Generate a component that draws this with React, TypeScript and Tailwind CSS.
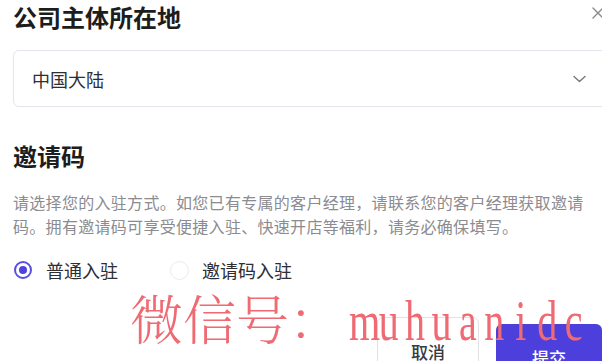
import React from "react";

const latin = "muhuanidc".split("");

export default function App() {
  return (
    <div className="relative w-[602px] h-[361px] overflow-hidden bg-white font-['Noto_Sans_CJK_SC',sans-serif]">
      <div className="flex flex-col pl-[13px]">
        {/* header */}
        <div className="flex items-start h-[50px]">
          <div className="mt-[2px] text-[24px] leading-[30px] font-semibold text-[#1d1d20]">
            公司主体所在地
          </div>
          <svg
            className="ml-auto mt-[7px] mr-[-2px]"
            width="12"
            height="12"
            viewBox="0 0 12 12"
            fill="none"
            stroke="#8a8a8e"
            strokeWidth="1.4"
            strokeLinecap="round"
          >
            <path d="M1 1L11 11M11 1L1 11" />
          </svg>
        </div>

        {/* select */}
        <div className="flex items-center justify-between w-[600px] h-[57px] border border-[#e4e4ec] rounded-[6px] pl-[18px] pr-[26px]">
          <span className="text-[18px] leading-[24px] text-[#2e2e33]">中国大陆</span>
          <svg
            width="13"
            height="8"
            viewBox="0 0 13 8"
            fill="none"
            stroke="#77777c"
            strokeWidth="1.4"
            strokeLinecap="round"
            strokeLinejoin="round"
          >
            <path d="M1 1.5L6.5 6.5L12 1.5" />
          </svg>
        </div>

        {/* invite code */}
        <div className="mt-[34px] text-[24px] leading-[30px] font-semibold text-[#1d1d20]">
          邀请码
        </div>
        <p className="mt-[19px] w-[576px] text-[16px] leading-[24px] tracking-[0.3px] text-[#8b8b90]">
          请选择您的入驻方式。如您已有专属的客户经理，请联系您的客户经理获取邀请码。拥有邀请码可享受便捷入驻、快速开店等福利，请务必确保填写。
        </p>

        {/* radios */}
        <div className="mt-[19px] flex items-center h-[26px]">
          <span className="ml-[1px] flex items-center justify-center w-[18px] h-[18px] rounded-full border-2 border-[#5b4fe2]">
            <span className="w-[8px] h-[8px] rounded-full bg-[#4f42de]" />
          </span>
          <span className="ml-[14px] text-[18px] leading-[24px] text-[#2e2e33]">普通入驻</span>
          <span className="ml-[52px] w-[19px] h-[19px] rounded-full border border-[#ececef]" />
          <span className="ml-[13px] text-[18px] leading-[24px] text-[#2e2e33]">邀请码入驻</span>
        </div>

        {/* buttons */}
        <div className="mt-[34px] flex items-start">
          <div className="ml-[364px] w-[106px] h-[60px] border border-[#e2e2e6] rounded-[6px] flex justify-center pt-[24px] text-[17px] leading-[20px] font-medium text-[#3a3a40]">
            取消
          </div>
          <div className="ml-[17px] mt-[7px] w-[110px] h-[60px] rounded-[6px] bg-[#4d3fdc] flex justify-center pt-[24px] text-[17px] leading-[20px] font-medium text-white">
            提交
          </div>
        </div>
      </div>

      {/* watermark */}
      <div className="absolute left-[130px] top-[291px] flex items-baseline whitespace-nowrap text-[#ef6b74] pointer-events-none">
        <span className="text-[53px] leading-none font-light font-['Noto_Serif_CJK_SC','Noto_Sans_CJK_SC',serif]">
          微信号：
        </span>
        <span className="ml-[7px] inline-block origin-left scale-x-[0.69] text-[58px] leading-none font-['Liberation_Serif',serif]">
          {latin.map((c, i) => (
            <span key={i} className="inline-block w-[38.3px] text-center">
              {c}
            </span>
          ))}
        </span>
      </div>
    </div>
  );
}
